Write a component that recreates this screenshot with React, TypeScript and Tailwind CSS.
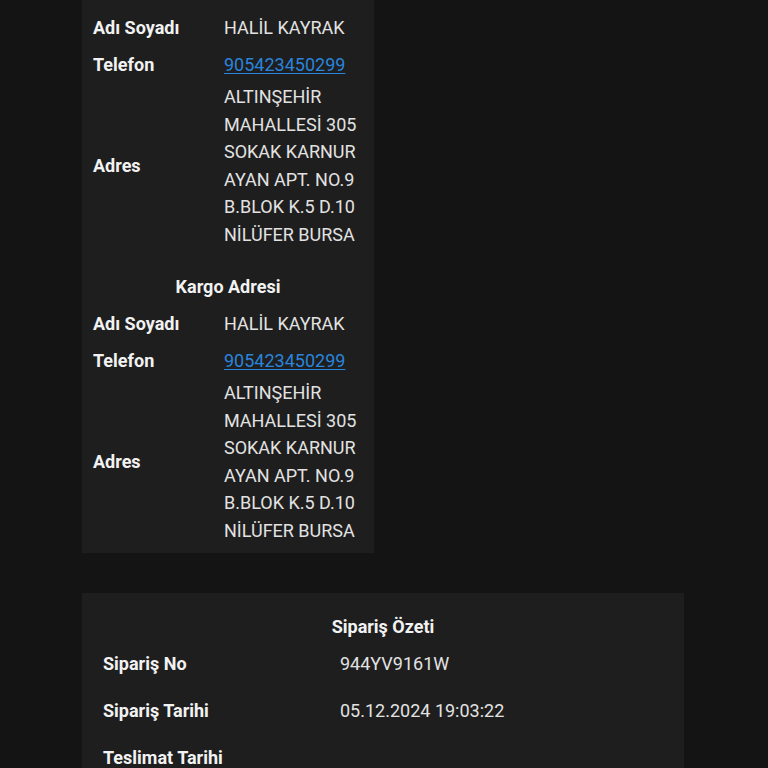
import React from 'react'

type Row = { label: string; value: React.ReactNode; multi?: boolean }

const address = ['ALTINŞEHİR', 'MAHALLESİ 305', 'SOKAK KARNUR', 'AYAN APT. NO.9', 'B.BLOK K.5 D.10', 'NİLÜFER BURSA']

function Phone({ num }: { num: string }) {
    return (
        <a href={`tel:${num}`} className="text-[#2a84dc] underline underline-offset-2">
            {num}
        </a>
    )
}

function AddressTable({ title, rows }: { title: string; rows: Row[] }) {
    return (
        <div>
            <div className="h-[37px] text-center font-bold leading-[37px] text-[#f2f2f2]">{title}</div>
            <div className="grid grid-cols-[131px_1fr] items-center">
                {rows.map((r) => (
                    <React.Fragment key={r.label}>
                        <div className="px-[5px] py-[5px] font-bold leading-[27px] text-[#f2f2f2]">{r.label}</div>
                        <div
                            className={
                                r.multi
                                    ? 'px-[5px] leading-[27.5px] text-[#e2e2e2]'
                                    : 'px-[5px] py-[5px] leading-[27px] text-[#e2e2e2]'
                            }
                        >
                            {r.value}
                        </div>
                    </React.Fragment>
                ))}
            </div>
        </div>
    )
}

export default function App() {
    const person = (title: string) => (
        <AddressTable
            title={title}
            rows={[
                { label: 'Adı Soyadı', value: 'HALİL KAYRAK' },
                { label: 'Telefon', value: <Phone num="905423450299" /> },
                {
                    label: 'Adres',
                    multi: true,
                    value: (
                        <div>
                            {address.map((l) => (
                                <div key={l}>{l}</div>
                            ))}
                        </div>
                    ),
                },
            ]}
        />
    )

    const summary: Row[] = [
        { label: 'Sipariş No', value: '944YV9161W' },
        { label: 'Sipariş Tarihi', value: '05.12.2024 19:03:22' },
        { label: 'Teslimat Tarihi', value: '' },
        { label: 'Ödeme Tipi', value: 'Kredi Kartı' },
    ]

    return (
        <div className="h-[768px] overflow-hidden bg-[#141414] font-['Roboto',sans-serif] text-[18px]">
            <div className="-mt-[44px] pl-[82px]">
                <div className="flex w-[292px] flex-col gap-[20px] bg-[#1e1e1e] px-[6px] pt-[16px] pb-[9px]">
                    {person('Fatura Adresi')}
                    {person('Kargo Adresi')}
                </div>

                <div className="mt-[40px] w-[602px] bg-[#1e1e1e] px-[16px] pt-[20px] pb-[20px]">
                    <div className="text-center font-bold leading-[27px] text-[#f2f2f2]">Sipariş Özeti</div>
                    <div className="grid grid-cols-[237px_1fr] items-center">
                        {summary.map((r) => (
                            <React.Fragment key={r.label}>
                                <div className="px-[5px] py-[10px] font-bold leading-[27px] text-[#f2f2f2]">{r.label}</div>
                                <div className="px-[5px] py-[10px] leading-[27px] text-[#e2e2e2]">{r.value}</div>
                            </React.Fragment>
                        ))}
                    </div>
                </div>
            </div>
        </div>
    )
}
